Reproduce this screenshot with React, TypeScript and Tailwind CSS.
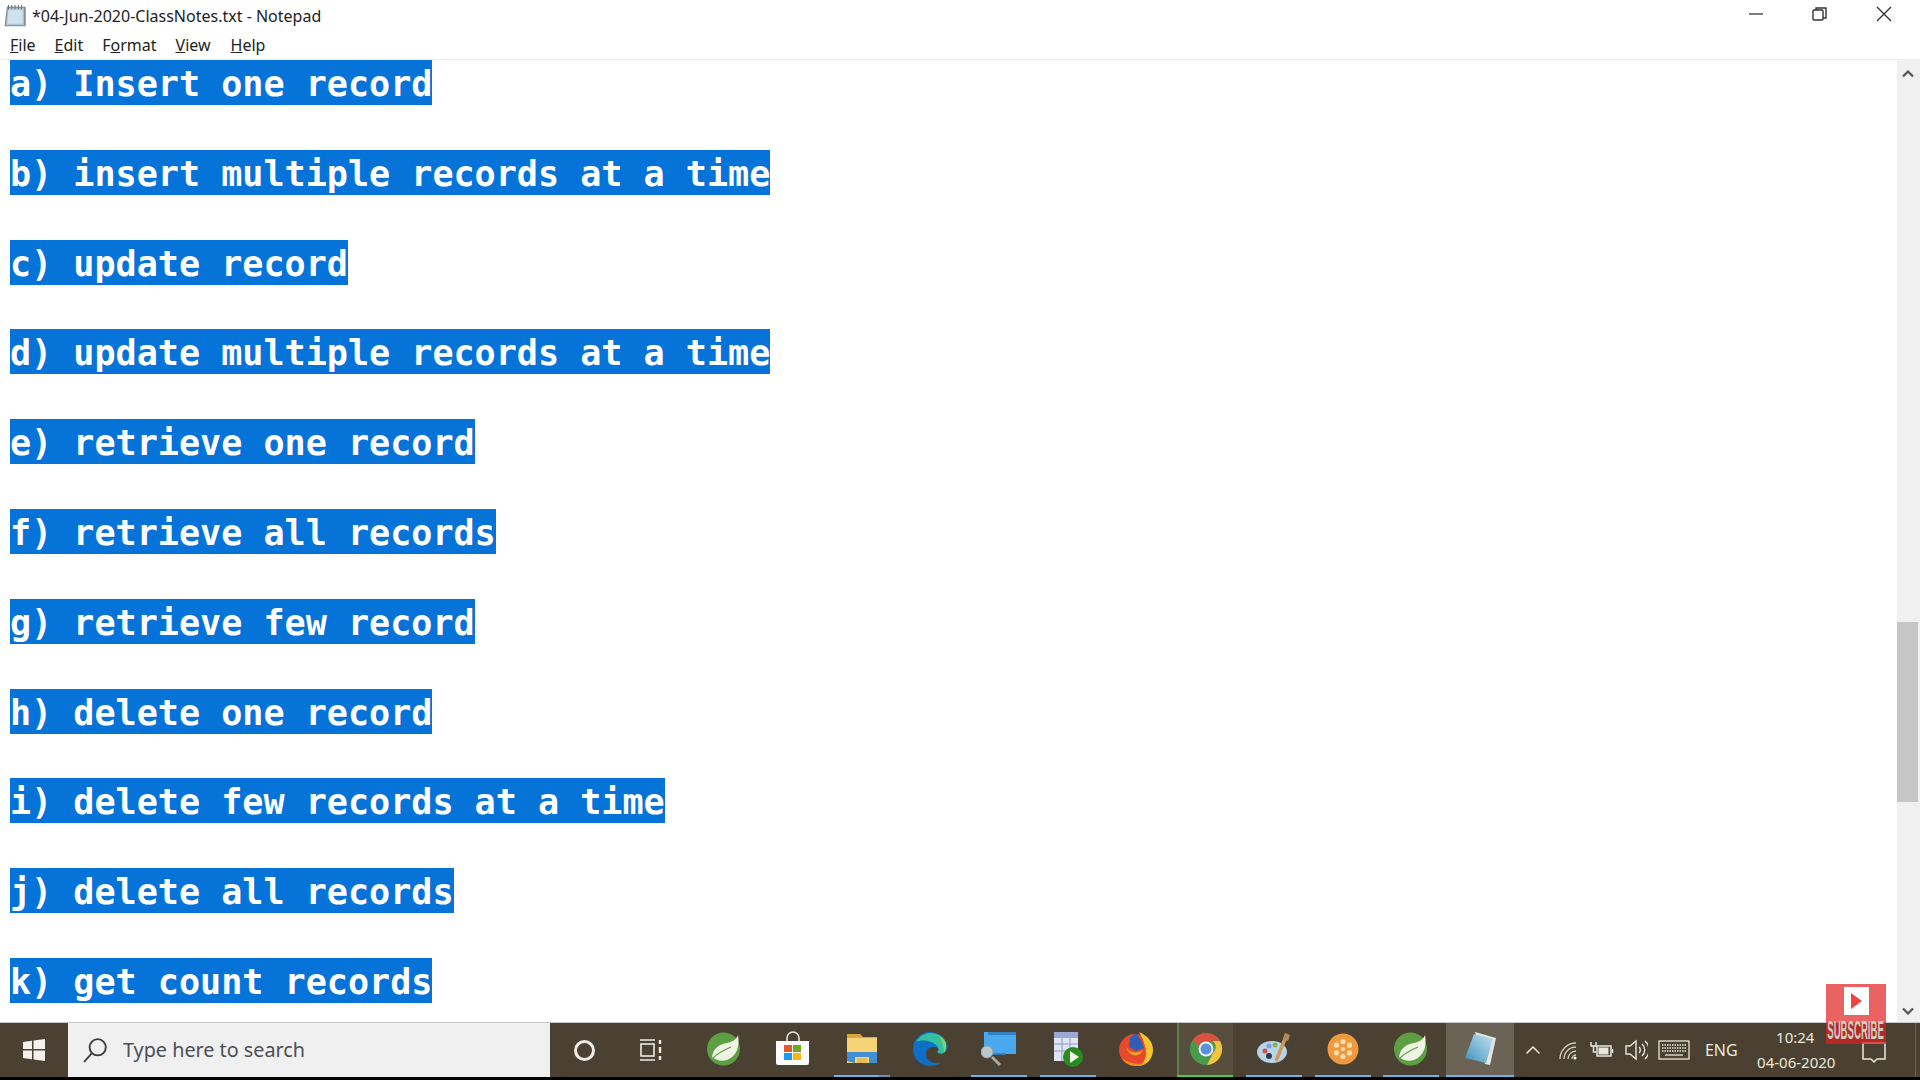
import { ChevronUp } from 'lucide-react';
import type { ReactNode } from 'react';

const records = [
  'a) Insert one record',
  'b) insert multiple records at a time',
  'c) update record',
  'd) update multiple records at a time',
  'e) retrieve one record',
  'f) retrieve all records',
  'g) retrieve few record',
  'h) delete one record',
  'i) delete few records at a time',
  'j) delete all records',
  'k) get count records',
];

const NotepadIcon = () => (
  <svg viewBox="0 0 22 22" className="h-[24px] w-[24px]">
    <path d="M4 3h16v17H2z" fill="#a9c6d8" stroke="#7b8790" strokeWidth="1" />
    <path d="M5 5h13v13H4z" fill="#cfe2ee" />
    <path d="M5 1v4M8 1v4M11 1v4M14 1v4M17 1v4" stroke="#6d7478" strokeWidth="1" />
    <path d="M20 3v17" stroke="#8a8f8c" strokeWidth="1.5" />
  </svg>
);

const Spring = () => (
  <svg viewBox="0 0 36 36" className="h-9 w-9">
    <circle cx="17.5" cy="18" r="16.5" fill="#5f9f44" />
    <path d="M32 4C34 15 31 25 21 29 15 31 10 29 6 26 7 18 13 13 21 12 26 11 30 9 32 4Z" fill="#eef3e6" />
    <path d="M7 27C12 22 18 19 25 16" stroke="#5f9f44" strokeWidth="1.2" fill="none" />
  </svg>
);

const Store = () => (
  <svg viewBox="0 0 36 36" className="h-9 w-9">
    <path d="M12 11V7a6 6 0 0 1 12 0v4" fill="none" stroke="#e8e4da" strokeWidth="1.6" />
    <path d="M1 10h33v22a2 2 0 0 1-2 2H3a2 2 0 0 1-2-2Z" fill="#fbfbfb" />
    <rect x="9" y="14" width="8" height="7" fill="#e8562a" />
    <rect x="18" y="14" width="8" height="7" fill="#72a81f" />
    <rect x="9" y="22" width="8" height="7" fill="#1a9cf0" />
    <rect x="18" y="22" width="8" height="7" fill="#fbb417" />
  </svg>
);

const Explorer = () => (
  <svg viewBox="0 0 36 36" className="h-9 w-9">
    <path d="M3 3h13l3 3h14v26H3Z" fill="#d8a840" />
    <rect x="3" y="7" width="30" height="25" fill="#f6d376" />
    <path d="M3 30V21h30v11H25v-6H11v6Z" fill="#3f8fd2" />
    <rect x="13" y="27" width="10" height="5" fill="#e9bb58" />
  </svg>
);

const Edge = () => (
  <svg viewBox="0 0 36 36" className="h-9 w-9">
    <path d="M18 1C8 1 1 9 1 18c0 10 8 17 17 17 4 0 8-1 11-4-8 3-15-1-15-8 0-4 3-7 7-7 4 0 7 2 7 5h6c2-3 2-5 1-8C33 6 26 1 18 1Z" fill="#0e6fc4" />
    <path d="M4 11C8 4 14 2 19 2c8 0 14 5 15 11 1 3 0 6-1 8-2 2-6 2-8 0 2-1 2-4 0-6-4-5-15-7-21-4Z" fill="#35bfa0" />
    <path d="M27 5c4 2 7 5 7 9 0 3-1 6-2 7 0-6-2-12-5-16Z" fill="#8ad35a" />
  </svg>
);

const MonitorSearch = () => (
  <svg viewBox="0 0 36 36" className="h-9 w-9">
    <rect x="3" y="1" width="32" height="22" fill="#4aa9ee" />
    <rect x="7" y="1" width="28" height="3" fill="#2f83c6" />
    <path d="M3 23h22" stroke="#2f83c6" strokeWidth="1.500" />
    <circle cx="6" cy="21" r="6" fill="#b7c7d0" stroke="#97a2a7" strokeWidth="1" />
    <path d="M11 26l8 8" stroke="#a9aaa4" strokeWidth="3" />
  </svg>
);

const TablePlay = () => (
  <svg viewBox="0 0 36 36" className="h-9 w-9">
    <rect x="4" y="1" width="24" height="29" fill="#dfe3f2" />
    <rect x="4" y="1" width="24" height="6" fill="#9aa8d6" />
    <path d="M4 13h24M4 20h24M12 7v23M20 7v23" stroke="#8c9cc9" strokeWidth="1" />
    <circle cx="23" cy="26" r="10" fill="#2a8c1f" />
    <path d="M20 20l9 6-9 6Z" fill="#f2f6e9" />
  </svg>
);

const Firefox = () => (
  <svg viewBox="0 0 36 36" className="h-9 w-9">
    <circle cx="17" cy="19" r="16" fill="#e8492d" />
    <path d="M21 1c9 4 14 10 14 18 0 9-7 16-15 16 9-3 12-15 1-34Z" fill="#f7c432" />
    <path d="M4 27c3 6 9 8 15 8 3 0 6-1 8-3-8 2-17 0-23-5Z" fill="#f28a1e" />
    <path d="M12 7l6-5 5 7 3 8-8 3-7-4Z" fill="#2f5fb5" />
    <path d="M8 16c3 6 11 7 17 3-2 6-13 9-17-3Z" fill="#f7a625" />
  </svg>
);

const Chrome = () => (
  <svg viewBox="0 0 36 36" className="h-9 w-9">
    <circle cx="18" cy="18" r="16" fill="#4a9a4c" />
    <path d="M18 2a16 16 0 0 1 14 8H18a8 8 0 0 0-7.400 5L4.500 9.500A16 16 0 0 1 18 2Z" fill="#d9513f" />
    <path d="M32 10a16 16 0 0 1-13 24l6-12a8 8 0 0 0 0-12Z" fill="#f0c340" />
    <circle cx="18" cy="18" r="7.500" fill="#efefef" />
    <circle cx="18" cy="18" r="5.500" fill="#5a8fe0" />
  </svg>
);

const Palette = () => (
  <svg viewBox="0 0 36 36" className="h-9 w-9">
    <ellipse cx="16" cy="21" rx="15" ry="11" fill="#b9d4e8" />
    <circle cx="9" cy="20" r="2.500" fill="#c9564a" />
    <circle cx="13" cy="15" r="2.500" fill="#7da4d8" />
    <circle cx="19" cy="14" r="2.500" fill="#8ab04d" />
    <circle cx="13" cy="25" r="3" fill="#2f3a48" />
    <path d="M31 3L20 30" stroke="#c99a5c" strokeWidth="3.500" />
    <path d="M29 2l5 2-2 6-5-2Z" fill="#b5885a" />
  </svg>
);

const Orange = () => (
  <svg viewBox="0 0 36 36" className="h-9 w-9">
    <circle cx="18" cy="18" r="15.500" fill="#ef9a3e" />
    <g fill="#fbdcae">
      <circle cx="18" cy="18" r="2" />
      <circle cx="18" cy="10.500" r="2.600" />
      <circle cx="18" cy="25.500" r="2.600" />
      <circle cx="11.500" cy="14.200" r="2.600" />
      <circle cx="24.500" cy="14.200" r="2.600" />
      <circle cx="11.500" cy="21.800" r="2.600" />
      <circle cx="24.500" cy="21.800" r="2.600" />
    </g>
  </svg>
);

const NotepadTask = () => (
  <svg viewBox="0 0 36 36" className="h-9 w-9">
    <defs>
      <linearGradient id="padFill" x1="0" y1="1" x2="1" y2="0">
        <stop offset="0" stopColor="#3f8fb8" />
        <stop offset="1" stopColor="#c4e4f4" />
      </linearGradient>
    </defs>
    <path d="M13 1l21 6-6 27-5-1Z" fill="#e2e6e0" />
    <path d="M12 3l19 5-7 24L3 27Z" fill="url(#padFill)" />
  </svg>
);

const TaskCell = ({
  children,
  bar,
  className = '',
}: {
  children: ReactNode;
  bar?: ReactNode;
  className?: string;
}) => (
  <div className={`flex w-[68.7px] flex-col items-center ${className}`}>
    <div className="flex flex-1 items-center justify-center">{children}</div>
    <div className="flex h-[2px] w-full justify-center">{bar}</div>
  </div>
);

const BlueBar = () => <div className="h-[2px] w-[56px] bg-[#6cb3ea]" />;

const TrayCell = ({ w, children }: { w: string; children: ReactNode }) => (
  <div className={`flex items-center justify-center ${w}`}>{children}</div>
);

export default function App() {
  return (
    <div className="flex h-screen w-[1920px] flex-col overflow-hidden bg-white font-['Noto_Sans',sans-serif]">
      {/* title bar */}
      <div className="flex h-[32px] items-center pl-[3px] text-[#222]">
        <NotepadIcon />
        <span className="ml-[5px] text-[16px]">*04-Jun-2020-ClassNotes.txt - Notepad</span>
        <div className="ml-auto flex items-center pb-[4px] pr-[28px]">
          <svg viewBox="0 0 14 14" className="h-[14px] w-[14px] stroke-[#444]" strokeWidth="1.400">
            <path d="M0 7h14" />
          </svg>
          <svg viewBox="0 0 16 16" className="ml-[49px] h-4 w-4 fill-none stroke-[#333]" strokeWidth="1.400">
            <rect x="1" y="4" width="10" height="10" rx="1" />
            <path d="M4 4V2h10v10h-3" />
          </svg>
          <svg viewBox="0 0 16 16" className="ml-[48px] h-4 w-4 stroke-[#333]" strokeWidth="1.400">
            <path d="M1 1l14 14M15 1L1 15" />
          </svg>
        </div>
      </div>

      {/* menu */}
      <div className="flex h-[28px] items-center border-b border-[#ececec] pb-[1px] text-[16px] text-[#222]">
        <span className="ml-[10px]"><u>F</u>ile</span>
        <span className="ml-[19px]"><u>E</u>dit</span>
        <span className="ml-[19px]">F<u>o</u>rmat</span>
        <span className="ml-[19px]"><u>V</u>iew</span>
        <span className="ml-[20px]"><u>H</u>elp</span>
      </div>

      {/* editor */}
      <div className="flex min-h-0 flex-1">
        <div className="flex flex-1 flex-col gap-y-[44.8px] overflow-hidden pl-[10px] font-['DejaVu_Sans_Mono',monospace] text-[35.1px] font-bold leading-[48px] text-white">
          {records.map((line) => (
            <div key={line} className="h-[45px] shrink-0">
              <span className="inline-block h-[45px] whitespace-pre bg-[#0673d8]">{line}</span>
            </div>
          ))}
        </div>
        <div className="flex w-[23px] flex-col items-center bg-[#f0f0f0] pr-[2px]">
          <svg viewBox="0 0 12 8" className="mt-[10px] w-3 fill-none stroke-[#555]" strokeWidth="2.200">
            <path d="M1 6.500l5-5 5 5" />
          </svg>
          <div className="mt-[544px] h-[180px] w-[21px] bg-[#c6c6c6]" />
          <svg viewBox="0 0 12 8" className="mt-auto mb-[7px] w-3 fill-none stroke-[#555]" strokeWidth="2.200">
            <path d="M1 1.500l5 5 5-5" />
          </svg>
        </div>
      </div>

      {/* taskbar */}
      <div className="flex h-[55px] border-t border-[#c9c9c9] bg-[#4b4132]">
        <div className="flex w-[68px] items-center justify-center">
          <svg viewBox="0 0 24 24" className="h-[24px] w-[24px] fill-[#f4f1ea]">
            <path d="M1 4l9-1.300V11H1ZM11.500 2.500L23 1v10H11.500ZM1 12.500h9v8.800L1 20ZM11.500 12.500H23V23l-11.500-1.500Z" />
          </svg>
        </div>
        <div className="flex w-[482px] items-center bg-[#f0f0f0] pl-[14px] text-[19.8px] text-[#4a4f55]">
          <svg viewBox="0 0 24 24" className="h-[26px] w-[26px] fill-none stroke-[#3a3a3a]" strokeWidth="1.700">
            <circle cx="14.500" cy="9.500" r="7.500" />
            <path d="M9 15l-7 8" />
          </svg>
          <span className="ml-[15px]">Type here to search</span>
        </div>
        <div className="flex w-[68px] items-center justify-center">
          <div className="h-[21px] w-[21px] rounded-full border-[3px] border-[#efece3]" />
        </div>
        <div className="mr-[4px] flex w-[68px] items-center justify-center pr-[2px]">
          <svg viewBox="0 0 24 24" className="h-[24px] w-[24px] fill-none stroke-[#efece3]" strokeWidth="1.600">
            <path d="M1 2h15M1 22h15" />
            <rect x="2" y="6" width="13" height="12" />
            <path d="M21 2v4M21 9v6M21 18v4" strokeWidth="2.400" />
          </svg>
        </div>
        <TaskCell><Spring /></TaskCell>
        <TaskCell><Store /></TaskCell>
        <TaskCell
          bar={
            <>
              <div className="h-[2px] w-[44px] bg-[#6cb3ea]" />
              <div className="h-[2px] w-[12px] bg-[#5d93bd]" />
            </>
          }
        >
          <Explorer />
        </TaskCell>
        <TaskCell><Edge /></TaskCell>
        <TaskCell bar={<BlueBar />}><MonitorSearch /></TaskCell>
        <TaskCell bar={<BlueBar />}><TablePlay /></TaskCell>
        <TaskCell><Firefox /></TaskCell>
        <TaskCell bar={<div className="h-[2px] w-[56px] bg-[#3fd24a]" />}>
          <div className="flex h-full w-[56px] items-center justify-center border-l-2 border-[#5f7f4a] bg-[#574e3e]">
            <Chrome />
          </div>
        </TaskCell>
        <TaskCell bar={<BlueBar />}><Palette /></TaskCell>
        <TaskCell bar={<BlueBar />}><Orange /></TaskCell>
        <TaskCell bar={<BlueBar />}><Spring /></TaskCell>
        <TaskCell
          className="bg-[#6a6356]"
          bar={<div className="h-[2px] w-full bg-[#6cb3ea]" />}
        >
          <NotepadTask />
        </TaskCell>

        {/* tray */}
        <div className="flex flex-1 text-[#ebe7dd]">
          <TrayCell w="w-[38px]"><ChevronUp className="h-[24px] w-[24px]" strokeWidth={1.6} /></TrayCell>
          <TrayCell w="w-[34px]">
            <svg viewBox="0 0 20 20" className="h-5 w-5 fill-none stroke-[#cfcbc1]" strokeWidth="1.300">
              <path d="M1 19A16 16 0 0 1 17 3M5 19A12 12 0 0 1 17 7M9 19a8 8 0 0 1 8-8M13 19a4 4 0 0 1 4-4" />
              <circle cx="16" cy="18" r="1.500" fill="#ffffff" stroke="none" />
            </svg>
          </TrayCell>
          <TrayCell w="w-[32px]">
            <svg viewBox="0 0 24 20" className="h-5 w-6 fill-none stroke-[#ebe7dd]" strokeWidth="1.500">
              <path d="M1 2v4h5V2M3.500 6v4M3.500 10v2h3" />
              <rect x="7" y="6" width="14" height="10" />
              <rect x="8.500" y="7.500" width="10" height="7" fill="#ebe7dd" stroke="none" />
              <path d="M22.500 9v4" />
            </svg>
          </TrayCell>
          <TrayCell w="w-[36px]">
            <svg viewBox="0 0 24 22" className="h-[22px] w-6 fill-none stroke-[#ebe7dd]" strokeWidth="1.400">
              <path d="M2 7h4l6-5v18l-6-5H2Z" />
              <path d="M15 8a4 4 0 0 1 0 6M18 5a8 8 0 0 1 0 12M21 2a12 12 0 0 1 0 18" />
            </svg>
          </TrayCell>
          <TrayCell w="w-[40px]">
            <svg viewBox="0 0 32 20" className="h-5 w-8 fill-none stroke-[#ebe7dd]" strokeWidth="1.300">
              <rect x="1" y="1" width="30" height="18" />
              <path d="M4 5h24M4 8h24M4 11h24" strokeDasharray="1.500 1" />
              <path d="M7 15h18" />
            </svg>
          </TrayCell>
          <TrayCell w="w-[54px]"><span className="text-[16px]">ENG</span></TrayCell>
          <div className="flex w-[96px] flex-col items-center justify-center gap-[3px] pb-[2px] text-[15px] leading-[22px]">
            <span className="mr-[2px]">10:24</span>
            <span>04-06-2020</span>
          </div>
          <TrayCell w="w-[60px]">
            <svg viewBox="0 0 24 24" className="mt-[6px] h-6 w-6 fill-none stroke-[#ebe7dd]" strokeWidth="1.500">
              <path d="M1 2h22v16h-8l-3 3-3-3H1Z" />
            </svg>
          </TrayCell>
          <div className="ml-[11px] w-px bg-[#6a6356]" />
        </div>
      </div>
      <div className="h-[3px] bg-black" />

      {/* subscribe watermark */}
      <div className="absolute left-[1826px] top-[984px] flex h-[60px] w-[60px] flex-col items-center overflow-hidden bg-[#e21f1f]/70 pt-[3px]">
        <div className="flex h-[28px] w-[25px] shrink-0 items-center justify-center bg-white">
          <div className="h-0 w-0 border-y-[8px] border-l-[11px] border-y-transparent border-l-[#ee4444]" />
        </div>
        <span className="mt-[1px] scale-x-[0.37] whitespace-nowrap font-['Liberation_Sans',sans-serif] text-[26px] font-bold leading-[28px] text-[#d0cbc3]">
          SUBSCRIBE
        </span>
      </div>
    </div>
  );
}
